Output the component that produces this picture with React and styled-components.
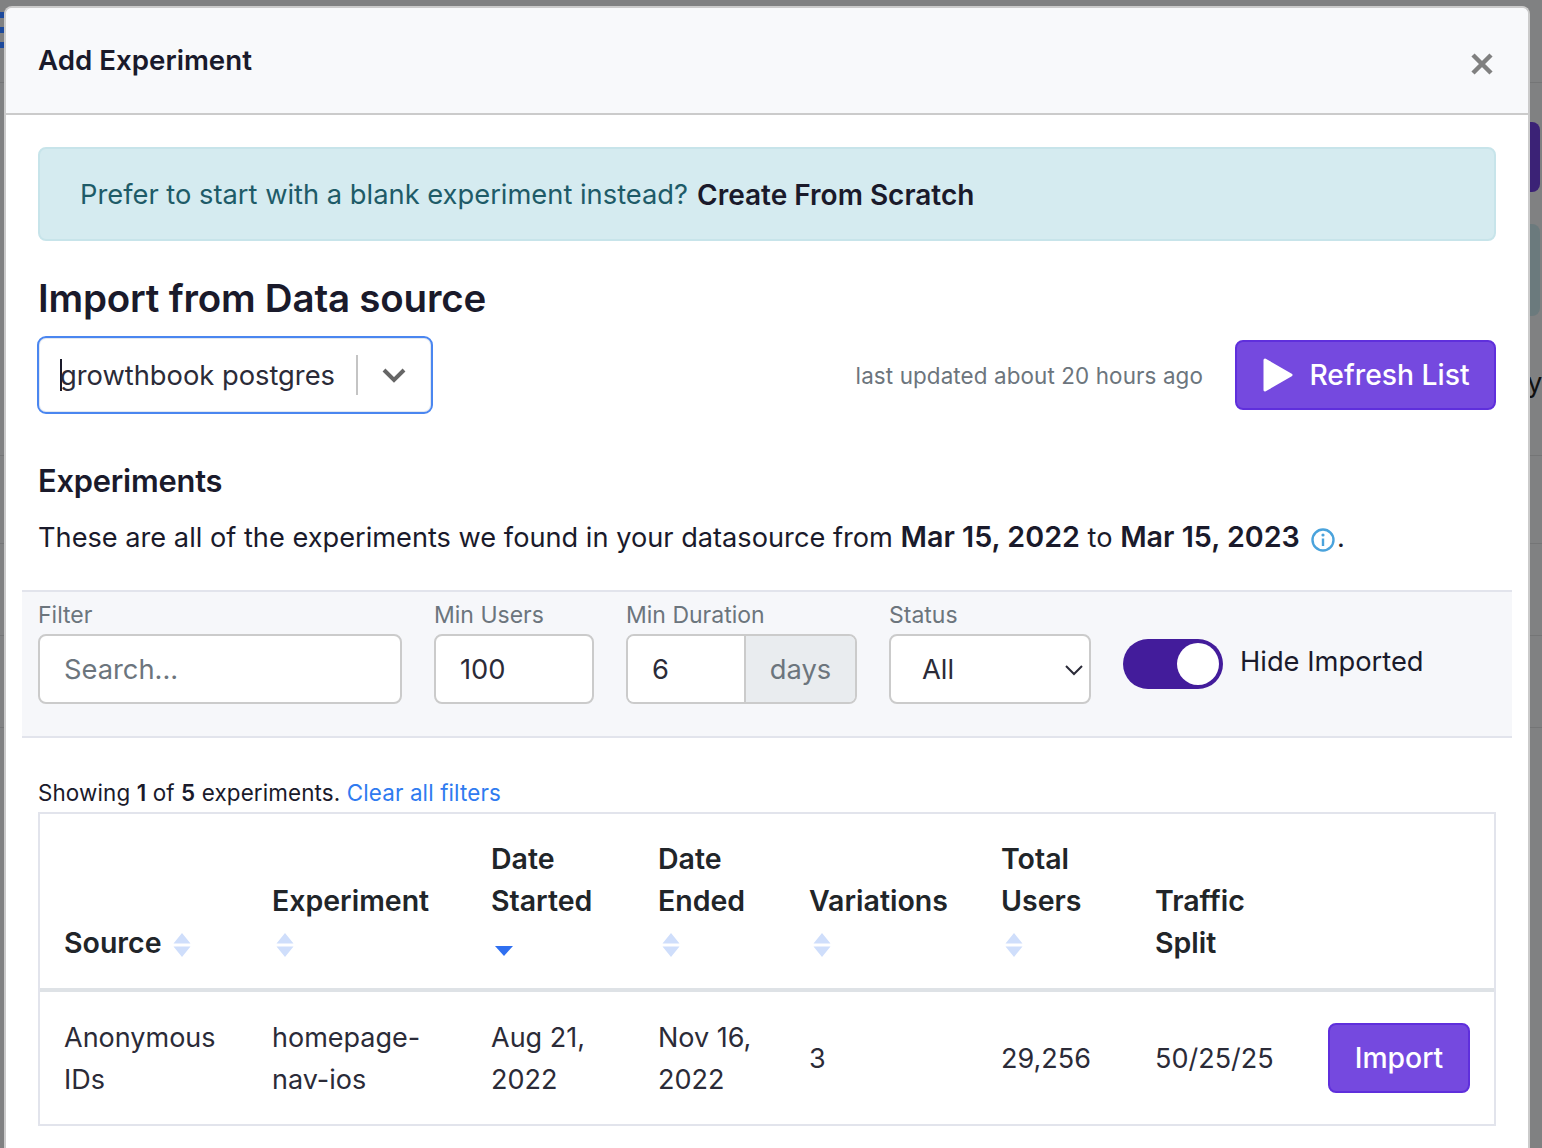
import styled, { createGlobalStyle } from 'styled-components';
import { useState } from 'react';

const Global = createGlobalStyle`
  html, body, #root { margin: 0; height: 100%; overflow: hidden; }
  body {
    background: #808182;
    font-family: Inter, "Noto Sans", sans-serif;
    font-size: 27.3px;
    line-height: 42px;
    color: #1a1a2b;
  }
  * { box-sizing: border-box; }
`;

const Page = styled.div`
  position: relative;
  height: 1148px;
  padding: 6px 0 0 4px;
  overflow: hidden;
`;

/* dimmed page behind the modal */
const BackLine = styled.div`
  position: absolute;
  left: 0;
  right: 0;
  top: ${(p) => p.$top}px;
  height: 1px;
  background: #747576;
`;
const MenuBar = styled.div`
  position: absolute;
  left: 0;
  top: ${(p) => p.$top}px;
  width: 4px;
  height: 6px;
  background: #1d4a9c;
`;
const BackButton = styled.div`
  position: absolute;
  left: 1520px;
  top: 122px;
  width: 20px;
  height: 70px;
  border-radius: 8px;
  background: #3b2276;
`;
const BackCard = styled.div`
  position: absolute;
  left: 1520px;
  top: 224px;
  width: 20px;
  height: 92px;
  border-radius: 8px;
  background: #6b7a7d;
`;
const BackLetter = styled.span`
  position: absolute;
  left: 1527px;
  top: 362px;
  color: #111;
`;

const Modal = styled.div`
  position: relative;
  width: 1526px;
  height: 1200px;
  background: #fff;
  border: 2px solid #cbcbcb;
  border-bottom: 0;
  border-radius: 8px 8px 0 0;
`;

const Header = styled.header`
  height: 107px;
  padding: 0 32px;
  background: #f8f9fb;
  border-bottom: 2px solid #cbcbcb;
  border-radius: 6px 6px 0 0;
  display: flex;
  justify-content: space-between;
`;
const Title = styled.h5`
  margin: 31px 0 0;
  font-size: 27.7px;
  line-height: 42px;
  font-weight: 600;
`;
const Close = styled.button`
  margin: 44px 2px 0 0;
  width: 24px;
  height: 24px;
  padding: 0;
  border: 0;
  background: none;
  svg { display: block; }
`;

const Body = styled.div`
  padding: 32px 32px 0;
`;

const Alert = styled.div`
  height: 94px;
  padding: 2px 40px 0;
  display: flex;
  align-items: center;
  gap: 9px;
  background: #d5ebf0;
  border: 2px solid #c7e4ea;
  border-radius: 8px;
  color: #1e5b68;
`;
const AlertLink = styled.strong`
  color: #1a1a2b;
  font-size: 28px;
  font-weight: 600;
`;

const Heading = styled.h3`
  margin: 32px 0 0;
  font-size: 38.500px;
  line-height: 50px;
  font-weight: 600;
  letter-spacing: -0.2px;
`;

const SourceRow = styled.div`
  margin-top: 13px;
  display: flex;
  align-items: center;
`;
const SourceSelect = styled.div`
  width: 396px;
  height: 78px;
  margin-left: -1px;
  border: 2px solid #4a86f0;
  border-radius: 9px;
  box-shadow: inset 0 0 0 1px #e3e8f0;
  display: flex;
  align-items: center;
  padding-left: 21px;
`;
const Caret = styled.span`
  width: 2px;
  height: 32px;
  background: #1a1a2b;
  margin-right: -2px;
`;
const SourceValue = styled.span`
  width: 296px;
  padding-top: 2px;
  color: #2b2b38;
`;
const Divider = styled.span`
  width: 2px;
  height: 40px;
  background: #c4c4c4;
`;
const Chevron = styled.span`
  margin-left: 24px;
  display: flex;
`;
const Updated = styled.span`
  margin-left: auto;
  padding-top: 2px;
  font-size: 22.400px;
  letter-spacing: 0.12px;
  color: #6c757d;
`;
const Button = styled.button`
  height: 70px;
  border: 2px solid #5f2fdc;
  border-radius: 8px;
  background: #7549df;
  color: #fff;
  font: 500 28.300px/42px Inter, sans-serif;
  display: flex;
  align-items: center;
  justify-content: center;
`;
const RefreshButton = styled(Button)`
  width: 261px;
  margin-left: 32px;
  padding-left: 8px;
  gap: 16px;
`;

const SubHeading = styled.h4`
  margin: 47px 0 0;
  font-size: 30.800px;
  line-height: 40px;
  font-weight: 600;
  letter-spacing: -0.2px;
`;
const Intro = styled.p`
  margin: 15px 0 0;
  font-size: 27.200px;
  white-space: nowrap;
  strong { font-size: 28.700px; font-weight: 600; }
  svg { vertical-align: -5px; margin: 0 2px 0 11px; }
`;

const FilterBar = styled.div`
  margin: 31px -16px 0;
  height: 148px;
  padding: 0 16px;
  background: #f6f7fa;
  border-top: 2px solid #e2e4ec;
  border-bottom: 2px solid #e2e4ec;
  display: flex;
  gap: 32px;
`;
const Field = styled.div`
  width: ${(p) => p.$w}px;
  padding-top: 9px;
`;
const Label = styled.div`
  font-size: 23px;
  line-height: 28px;
  color: #6c757d;
  margin-bottom: 5px;
`;
const Input = styled.div`
  height: 70px;
  padding: 2px 24px 0;
  display: flex;
  align-items: center;
  background: #fff;
  border: 2px solid #cbcbcb;
  border-radius: 8px;
  color: ${(p) => (p.$muted ? '#6c757d' : '#2b2b38')};
`;
const Group = styled.div`
  display: flex;
  height: 70px;
  border: 2px solid #cbcbcb;
  border-radius: 8px;
  overflow: hidden;
`;
const GroupValue = styled.div`
  width: 116px;
  padding: 2px 0 0 24px;
  background: #fff;
  display: flex;
  align-items: center;
  color: #2b2b38;
`;
const GroupAddon = styled.div`
  flex: 1;
  padding-top: 2px;
  background: #e9ecef;
  border-left: 2px solid #cbcbcb;
  display: flex;
  align-items: center;
  justify-content: center;
  color: #6c757d;
`;
const StatusSelect = styled(Input)`
  justify-content: space-between;
  padding: 2px 5px 0 31px;
`;
const ToggleWrap = styled.div`
  margin-top: 47px;
  display: flex;
  align-items: flex-start;
  gap: 17px;
`;
const Toggle = styled.span`
  width: 100px;
  height: 50px;
  border-radius: 25px;
  background: #431c9b;
  padding: 4px;
  display: flex;
  justify-content: flex-end;
`;
const Knob = styled.span`
  width: 42px;
  height: 42px;
  border-radius: 50%;
  background: #fff;
`;
const ToggleText = styled.span`
  line-height: 46px;
`;

const Showing = styled.div`
  margin-top: 35px;
  font-size: 22.400px;
  letter-spacing: 0.13px;
  line-height: 40px;
  strong { font-weight: 600; }
  a { color: #2f7bf0; }
`;

const Table = styled.table`
  width: 1458px;
  margin-top: -1px;
  table-layout: fixed;
  border-collapse: separate;
  border-spacing: 0;
  border: 2px solid #e2e4ec;
`;
const Th = styled.th`
  width: ${(p) => p.$w}px;
  padding: 24px;
  text-align: left;
  vertical-align: bottom;
  font-size: 28.500px;
  font-weight: 600;
  color: #212529;
  border-bottom: 4px solid #dee2e6;
`;
const Td = styled.td`
  padding: 25px 24px 23px;
  vertical-align: middle;
  font-size: 27px;
  color: #2b2b38;
`;
const ActionTd = styled(Td)`
  padding: 24px;
`;
const SortIcon = styled.svg`
  display: ${(p) => (p.$block ? 'block' : 'inline-block')};
  margin: ${(p) => (p.$block ? '11px 0 7px 4px' : '0 0 0 12px')};
  vertical-align: -4px;
`;
const ImportButton = styled(Button)`
  width: 142px;
`;

const columns = [
  { w: 208, label: 'Source', inline: true },
  { w: 219, label: 'Experiment' },
  { w: 167, label: 'Date Started', active: true },
  { w: 151, label: 'Date Ended' },
  { w: 192, label: 'Variations' },
  { w: 154, label: 'Total Users' },
  { w: 173, label: 'Traffic Split', noSort: true },
  { w: 190, label: '', noSort: true },
];

function Sort({ active, block }) {
  if (active) {
    return (
      <SortIcon $block={block} width="18" height="24" viewBox="0 0 18 24">
        <path d="M0 13h18l-9 10z" fill="#2f6ff0" />
      </SortIcon>
    );
  }
  return (
    <SortIcon $block={block} width="18" height="24" viewBox="0 0 18 24">
      <path d="M9 0l8.5 10.500H.5zM.5 13.500h17L9 24z" fill="#cfdefb" />
    </SortIcon>
  );
}

export default function App() {
  const [hideImported] = useState(true);

  return (
    <Page>
      <Global />
      <MenuBar $top={12} />
      <MenuBar $top={27} />
      <MenuBar $top={42} />
      <BackLine $top={82} />
      <BackLine $top={455} />
      <BackLine $top={543} />
      <BackLine $top={635} />
      <BackLine $top={727} />
      <BackButton />
      <BackCard />
      <BackLetter>y</BackLetter>

      <Modal>
        <Header>
          <Title>Add Experiment</Title>
          <Close aria-label="Close">
            <svg width="24" height="24" viewBox="0 0 24 24">
              <path d="M3 3l18 18M21 3L3 21" stroke="#808080" strokeWidth="4.500" />
            </svg>
          </Close>
        </Header>

        <Body>
          <Alert>
            Prefer to start with a blank experiment instead?
            <AlertLink>Create From Scratch</AlertLink>
          </Alert>

          <Heading>Import from Data source</Heading>

          <SourceRow>
            <SourceSelect>
              <Caret />
              <SourceValue>growthbook postgres</SourceValue>
              <Divider />
              <Chevron>
                <svg width="24" height="16" viewBox="0 0 24 16">
                  <path d="M2 3l10 10L22 3" fill="none" stroke="#666" strokeWidth="4" />
                </svg>
              </Chevron>
            </SourceSelect>
            <Updated>last updated about 20 hours ago</Updated>
            <RefreshButton>
              <svg width="30" height="34" viewBox="0 0 30 34">
                <path d="M2 2l26 15L2 32z" fill="#fff" stroke="#fff" strokeWidth="3" strokeLinejoin="round" />
              </svg>
              Refresh List
            </RefreshButton>
          </SourceRow>

          <SubHeading>Experiments</SubHeading>
          <Intro>
            These are all of the experiments we found in your datasource from{' '}
            <strong>Mar 15, 2022</strong> to <strong>Mar 15, 2023</strong>
            <svg width="24" height="24" viewBox="0 0 24 24">
              <circle cx="12" cy="12" r="10.500" fill="none" stroke="#4aa3dc" strokeWidth="2.400" />
              <path d="M12 10.500v7.500" stroke="#4aa3dc" strokeWidth="2.400" />
              <circle cx="12" cy="7" r="1.600" fill="#4aa3dc" />
            </svg>
            .
          </Intro>

          <FilterBar>
            <Field $w={364}>
              <Label>Filter</Label>
              <Input $muted>Search...</Input>
            </Field>
            <Field $w={160}>
              <Label>Min Users</Label>
              <Input>100</Input>
            </Field>
            <Field $w={231}>
              <Label>Min Duration</Label>
              <Group>
                <GroupValue>6</GroupValue>
                <GroupAddon>days</GroupAddon>
              </Group>
            </Field>
            <Field $w={202}>
              <Label>Status</Label>
              <StatusSelect>
                All
                <svg width="20" height="12" viewBox="0 0 20 12">
                  <path d="M2 2l8 8 8-8" fill="none" stroke="#2b2b38" strokeWidth="2" />
                </svg>
              </StatusSelect>
            </Field>
            <ToggleWrap>
              <Toggle>{hideImported && <Knob />}</Toggle>
              <ToggleText>Hide Imported</ToggleText>
            </ToggleWrap>
          </FilterBar>

          <Showing>
            Showing <strong>1</strong> of <strong>5</strong> experiments. <a>Clear all filters</a>
          </Showing>

          <Table>
            <thead>
              <tr>
                {columns.map((c) => (
                  <Th key={c.w + c.label} $w={c.w}>
                    {c.label}
                    {!c.noSort && <Sort active={c.active} block={!c.inline} />}
                  </Th>
                ))}
              </tr>
            </thead>
            <tbody>
              <tr>
                <Td>Anonymous IDs</Td>
                <Td>homepage-nav-ios</Td>
                <Td>Aug 21, 2022</Td>
                <Td>Nov 16, 2022</Td>
                <Td>3</Td>
                <Td>29,256</Td>
                <Td>50/25/25</Td>
                <ActionTd><ImportButton>Import</ImportButton></ActionTd>
              </tr>
            </tbody>
          </Table>
        </Body>
      </Modal>
    </Page>
  );
}
